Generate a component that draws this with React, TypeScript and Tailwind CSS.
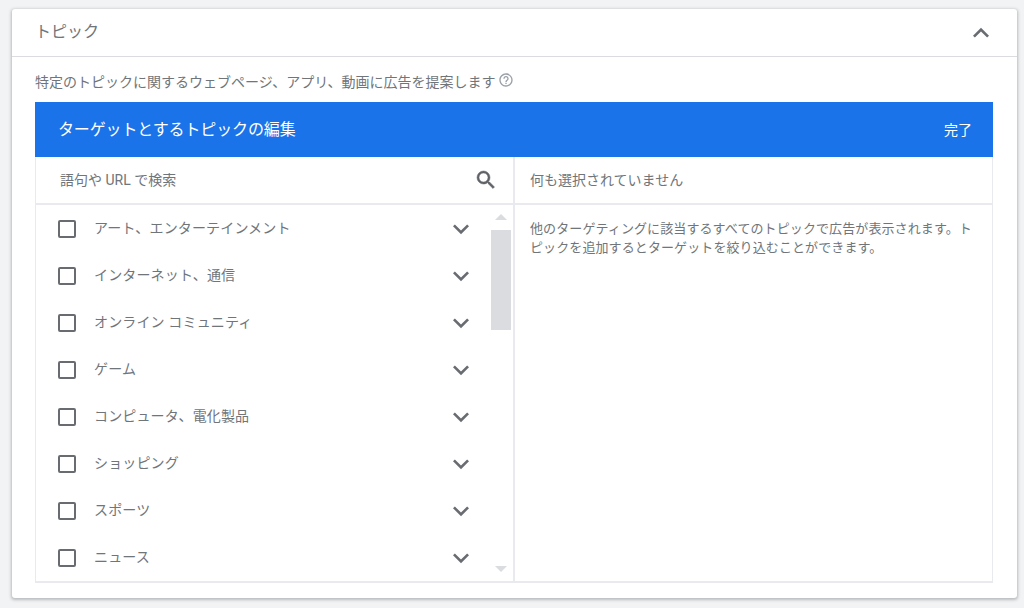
const F = { fontFamily: '"Roboto", "Noto Sans CJK JP", sans-serif' };
const items = ["アート、エンターテインメント","インターネット、通信","オンライン コミュニティ","ゲーム","コンピュータ、電化製品","ショッピング","スポーツ","ニュース"];

function Chevron({ up = false }: { up?: boolean }) {
  return (
    <svg width="32" height="32" viewBox="0 0 24 24" fill="#686c71" className="shrink-0">
      <path d={up ? "M12 8l-6 6 1.41 1.41L12 10.83l4.59 4.58L18 14z" : "M16.59 8.59 12 13.17 7.41 8.59 6 10l6 6 6-6z"} />
    </svg>
  );
}

export default function App() {
  return (
    <div className="h-[608px] w-[1024px] overflow-hidden bg-[#f1f3f4] pt-[9px] pl-3 text-[#70757a]" style={F}>
      <div className="flex h-[589px] w-[1005px] flex-col rounded-[3px] bg-white shadow-[0_1px_3px_1px_rgba(60,64,67,0.3)]">
        <div className="flex h-[48px] shrink-0 items-center justify-between border-b border-[#dadce0] pl-[23px] pr-5">
          <span className="-mt-[2px] text-base leading-6">トピック</span>
          <Chevron up />
        </div>
        <div className="flex h-[45px] shrink-0 items-center gap-1 pl-[23px] pt-[4px] text-sm">
          <span>特定のトピックに関するウェブページ、アプリ、動画に広告を提案します</span>
          <svg width="16" height="16" viewBox="0 0 24 24" fill="#9aa0a6" className="mb-[3px] -ml-[1px]">
            <path d="M11 18h2v-2h-2v2zm1-16C6.48 2 2 6.48 2 12s4.48 10 10 10 10-4.48 10-10S17.52 2 12 2zm0 18c-4.41 0-8-3.59-8-8s3.59-8 8-8 8 3.59 8 8-3.59 8-8 8zm0-14c-2.21 0-4 1.79-4 4h2c0-1.1.9-2 2-2s2 .9 2 2c0 2-3 1.75-3 5h2c0-2.25 3-2.5 3-5 0-2.21-1.79-4-4-4z" />
          </svg>
        </div>
        <div className="ml-[23px] flex h-[481px] w-[958px] flex-col">
          <div className="flex h-[55px] shrink-0 items-center justify-between bg-[#1a73e8] pl-[23px] pr-[21px] text-white">
            <span className="text-base tracking-[-0.13px]">ターゲットとするトピックの編集</span>
            <span className="text-sm">完了</span>
          </div>
          <div className="flex min-h-0 flex-1 border-x border-b-2 border-[#e8eaed]">
            <div className="flex w-[479px] shrink-0 flex-col border-r-2 border-[#e8eaed]">
              <div className="flex h-[48px] shrink-0 items-center justify-between border-b-2 border-[#e8eaed] pl-6 pr-[15px]">
                <span className="text-sm">語句や URL で検索</span>
                <svg width="24" height="24" viewBox="0 0 24 24" fill="#5f6368" stroke="#5f6368" strokeWidth="0.5">
                  <path d="M15.5 14h-.79l-.28-.27A6.47 6.47 0 0 0 16 9.5 6.5 6.5 0 1 0 9.5 16c1.61 0 3.09-.59 4.23-1.57l.27.28v.79l5 4.99L20.49 19l-4.99-5zm-6 0C7.01 14 5 11.99 5 9.5S7.01 5 9.5 5 14 7.01 14 9.5 11.99 14 9.5 14z" />
                </svg>
              </div>
              <div className="flex min-h-0 flex-1">
                <div className="min-w-0 flex-1 overflow-hidden">
                  {items.map((t) => (
                    <div key={t} className="flex h-[47px] items-center pl-[22px] pr-[14px]">
                      <span className="h-[18px] w-[18px] shrink-0 rounded-[2px] border-2 border-[#686c71]" />
                      <span className="ml-[18px] -mt-[2px] flex-1 text-sm tracking-[0.15px]">{t}</span>
                      <Chevron />
                    </div>
                  ))}
                </div>
                <div className="flex w-[22px] shrink-0 flex-col items-center pt-[9px] pr-[2px]">
                  <span className="h-0 w-0 border-x-[6px] border-b-[6px] border-x-transparent border-b-[#dadce0]" />
                  <span className="mt-[10px] h-[100px] w-[20px] bg-[#dadce0]" />
                  <span className="mt-auto mb-[9px] h-0 w-0 border-x-[6px] border-t-[6px] border-x-transparent border-t-[#dadce0]" />
                </div>
              </div>
            </div>
            <div className="flex min-w-0 flex-1 flex-col">
              <div className="flex h-[48px] shrink-0 items-center border-b-2 border-[#e8eaed] pl-[15px] text-sm">何も選択されていません</div>
              <div className="pl-[15px] pr-[19px] pt-[14px] text-[13px] leading-[19px] tracking-[0.1px]">
                他のターゲティングに該当するすべてのトピックで広告が表示されます。トピックを追加するとターゲットを絞り込むことができます。
              </div>
            </div>
          </div>
        </div>
      </div>
    </div>
  );
}
